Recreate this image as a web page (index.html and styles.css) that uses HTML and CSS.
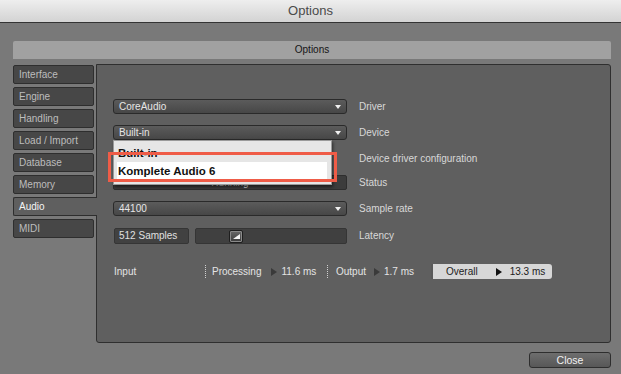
FILE: index.html
```html
<!DOCTYPE html>
<html>
<head>
<meta charset="utf-8">
<link rel="stylesheet" href="styles.css">
</head>
<body>
<div class="titlebar">Options</div>
<div class="window">
  <div class="header">Options</div>
  <div class="main">
    <nav class="tabs">
      <div class="tab">Interface</div>
      <div class="tab">Engine</div>
      <div class="tab">Handling</div>
      <div class="tab">Load / Import</div>
      <div class="tab">Database</div>
      <div class="tab">Memory</div>
      <div class="tab active">Audio</div>
      <div class="tab">MIDI</div>
    </nav>
    <section class="panel">
      <div class="form">
        <div class="select">CoreAudio<span class="arrow"></span></div>
        <div class="label">Driver</div>
        <div class="select">Built-in<span class="arrow"></span></div>
        <div class="label">Device</div>
        <div class="blank"></div>
        <div class="label">Device driver configuration</div>
        <div class="field">Running</div>
        <div class="label">Status</div>
        <div class="select">44100<span class="arrow"></span></div>
        <div class="label">Sample rate</div>
        <div class="latency">
          <div class="samples">512 Samples</div>
          <div class="slider"><div class="knob"><span class="ramp"></span></div></div>
        </div>
        <div class="label">Latency</div>
      </div>
      <div class="stats">
        <div class="s-input">Input</div>
        <div class="sep"></div>
        <div class="s-proc">Processing<span class="tri"></span><span class="val">11.6 ms</span></div>
        <div class="sep"></div>
        <div class="s-out">Output<span class="tri"></span><span class="val">1.7 ms</span></div>
        <div class="overall">Overall<span class="tri dark"></span><span class="val">13.3 ms</span></div>
      </div>
      <div class="popup">
        <div class="item">Built-in</div>
        <div class="item selected">Komplete Audio 6</div>
      </div>
      <div class="highlight"></div>
    </section>
  </div>
  <div class="footer"><button class="close">Close</button></div>
</div>
</body>
</html>
```

FILE: styles.css
```css
html, body {
  margin: 0;
  padding: 0;
}
body {
  width: 621px;
  height: 374px;
  overflow: hidden;
  background: #797979;
  font-family: "Liberation Sans", Arial, sans-serif;
  font-size: 10px;
  color: #dcdcdc;
}
.titlebar {
  height: 22px;
  line-height: 22px;
  text-align: center;
  font-size: 13px;
  color: #4a4a4a;
  background: linear-gradient(#eeeeee, #d3d3d3);
  border-bottom: 1px solid #333;
}
.window {
  padding: 18px 10px 0 13px;
}
.header {
  height: 18px;
  line-height: 18px;
  background: #a1a1a1;
  color: #151515;
  text-align: center;
  border-radius: 2px 2px 0 0;
  margin-bottom: 5px;
}
.main {
  display: flex;
  height: 279px;
}
.tabs {
  width: 83px;
  display: flex;
  flex-direction: column;
  gap: 3px;
  padding-top: 1px;
  position: relative;
  z-index: 2;
}
.tab {
  box-sizing: border-box;
  width: 81px;
  height: 19px;
  line-height: 17px;
  padding-left: 5px;
  background: #474747;
  border: 1px solid #2e2e2e;
  border-radius: 2px;
  color: #bdbdbd;
}
.tab.active {
  width: 84px;
  background: #5f5f5f;
  border-right: none;
  border-radius: 2px 0 0 2px;
  color: #f4f4f4;
}
.panel {
  flex: 1;
  position: relative;
  background: #5f5f5f;
  border: 1px solid #2f2f2f;
  border-radius: 0 3px 3px 3px;
  padding: 34px 0 0 16px;
}
.form {
  display: grid;
  grid-template-columns: 234px auto;
  grid-template-rows: 26px 26px 24px 26px 27px 16px;
  column-gap: 12px;
  align-items: start;
}
.select {
  position: relative;
  box-sizing: border-box;
  height: 15px;
  line-height: 13px;
  padding-left: 5px;
  background: linear-gradient(#5b5b5b, #474747);
  border: 1px solid #2a2a2a;
  border-radius: 3px;
  color: #e6e6e6;
}
.arrow {
  position: absolute;
  right: 5px;
  top: 5px;
  width: 0;
  height: 0;
  border-left: 3px solid transparent;
  border-right: 3px solid transparent;
  border-top: 4px solid #f0f0f0;
}
.label {
  line-height: 15px;
  color: #d8d8d8;
}
.field {
  box-sizing: border-box;
  height: 15px;
  line-height: 13px;
  text-align: center;
  background: #3c3c3c;
  border: 1px solid #2e2e2e;
  border-radius: 2px;
  color: #dcdcdc;
}
.latency {
  display: flex;
  gap: 6px;
  height: 16px;
}
.samples {
  box-sizing: border-box;
  width: 75px;
  height: 16px;
  line-height: 14px;
  padding-left: 4px;
  margin-left: 1px;
  background: #414141;
  border: 1px solid #353535;
  border-radius: 2px;
  color: #e0e0e0;
}
.slider {
  flex: 1;
  box-sizing: border-box;
  height: 16px;
  padding: 1px 0 0 33px;
  background: #404040;
  border: 1px solid #353535;
  border-radius: 2px;
}
.knob {
  position: relative;
  box-sizing: border-box;
  width: 14px;
  height: 13px;
  background: linear-gradient(#6a6a6a, #3a3a3a);
  border: 1px solid #1e1e1e;
  border-radius: 2px;
  box-shadow: inset 0 0 0 1px #8a8a8a;
}
.ramp {
  position: absolute;
  left: 3px;
  top: 3px;
  width: 0;
  height: 0;
  border-left: 7px solid transparent;
  border-bottom: 5px solid #f4f4f4;
}
.stats {
  display: flex;
  align-items: center;
  margin-top: 20px;
  margin-left: 1px;
  height: 15px;
  color: #e4e4e4;
}
.s-input {
  width: 91px;
}
.sep {
  width: 0;
  height: 13px;
  border-left: 1px dotted #d0d0d0;
}
.s-proc {
  width: 115px;
  padding-left: 6px;
  display: flex;
  align-items: center;
}
.s-out {
  width: 95px;
  padding-left: 8px;
  display: flex;
  align-items: center;
}
.tri {
  display: inline-block;
  width: 0;
  height: 0;
  border-top: 4px solid transparent;
  border-bottom: 4px solid transparent;
  border-left: 6px solid #3a3a3a;
  margin: 0 4px 0 10px;
}
.s-out .tri {
  margin-left: 8px;
}
.tri.dark {
  border-left-color: #111;
  margin: 0 8px 0 18px;
}
.overall {
  box-sizing: border-box;
  width: 121px;
  height: 15px;
  padding-left: 13px;
  display: flex;
  align-items: center;
  background: #d7d7d7;
  border-left: 2px solid #5a5a5a;
  border-radius: 0 3px 3px 0;
  color: #1c1c1c;
}
.popup {
  position: absolute;
  left: 16px;
  top: 75px;
  box-sizing: border-box;
  width: 219px;
  height: 45px;
  padding: 3px 4px 0 3px;
  background: #e6e6e6;
  border: 1px solid #9a9a9a;
  box-shadow: 1px 2px 3px rgba(0, 0, 0, 0.55);
  z-index: 3;
}
.item {
  height: 18px;
  line-height: 18px;
  padding-left: 1px;
  font-size: 11.5px;
  font-weight: bold;
  color: #111;
}
.item.selected {
  background: #ffffff;
}
.highlight {
  position: absolute;
  left: 11px;
  top: 87px;
  box-sizing: border-box;
  width: 229px;
  height: 30px;
  border: 3px solid #ef5c47;
  z-index: 4;
}
.footer {
  display: flex;
  justify-content: flex-end;
  padding-top: 9px;
}
.close {
  box-sizing: border-box;
  width: 82px;
  height: 16px;
  padding: 0;
  font-family: "Liberation Sans", Arial, sans-serif;
  font-size: 10.5px;
  color: #f2f2f2;
  background: linear-gradient(#6e6e6e, #575757);
  border: 1px solid #2e2e2e;
  border-radius: 3px;
}
```
